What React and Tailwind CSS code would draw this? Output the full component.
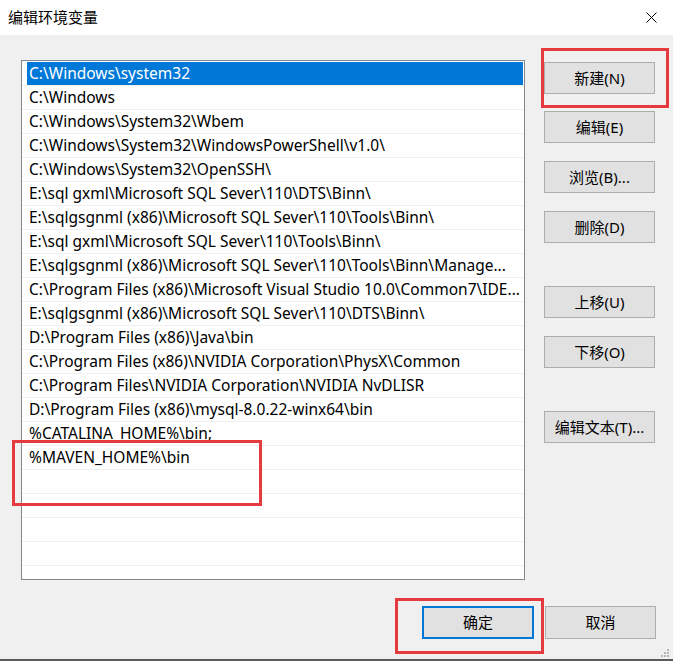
import React from 'react';

const paths = [
  'C:\\Windows\\system32',
  'C:\\Windows',
  'C:\\Windows\\System32\\Wbem',
  'C:\\Windows\\System32\\WindowsPowerShell\\v1.0\\',
  'C:\\Windows\\System32\\OpenSSH\\',
  'E:\\sql gxml\\Microsoft SQL Sever\\110\\DTS\\Binn\\',
  'E:\\sqlgsgnml (x86)\\Microsoft SQL Sever\\110\\Tools\\Binn\\',
  'E:\\sql gxml\\Microsoft SQL Sever\\110\\Tools\\Binn\\',
  'E:\\sqlgsgnml (x86)\\Microsoft SQL Sever\\110\\Tools\\Binn\\Manage...',
  'C:\\Program Files (x86)\\Microsoft Visual Studio 10.0\\Common7\\IDE...',
  'E:\\sqlgsgnml (x86)\\Microsoft SQL Sever\\110\\DTS\\Binn\\',
  'D:\\Program Files (x86)\\Java\\bin',
  'C:\\Program Files (x86)\\NVIDIA Corporation\\PhysX\\Common',
  'C:\\Program Files\\NVIDIA Corporation\\NVIDIA NvDLISR',
  'D:\\Program Files (x86)\\mysql-8.0.22-winx64\\bin',
  '%CATALINA_HOME%\\bin;',
  '%MAVEN_HOME%\\bin',
  '', '', '', '', '',
];

function Btn({ children, className = '' }) {
  return (
    <div className={`w-[111px] h-[32px] flex items-center justify-center bg-[#e1e1e1] border border-[#adadad] text-[15px] text-black ${className}`}>
      {children}
    </div>
  );
}

export default function App() {
  return (
    <div className="relative w-[673px] h-[661px] bg-[#f0f0f0] overflow-hidden"
      style={{ fontFamily: '"Noto Sans", "Noto Sans CJK SC", sans-serif' }}>
      {/* title bar */}
      <div className="h-[35px] bg-white flex items-center justify-between pl-[8px] pr-[16px]">
        <span className="text-[15px] text-black leading-none">编辑环境变量</span>
        <svg width="11" height="11" viewBox="0 0 11 11" className="block">
          <path d="M0.5 0.5 L10.5 10.5 M10.5 0.5 L0.5 10.5" stroke="#000" strokeWidth="1" />
        </svg>
      </div>

      {/* body */}
      <div className="flex flex-col pl-[21px] pr-[17px] pt-[25px]">
        <div className="flex">
          <div className="w-[504px] h-[520px] bg-white border border-[#828790] pt-px overflow-hidden">
            {paths.map((p, i) => (
              <div key={i} className="h-[24px] border-b border-[#f0f0f0] flex">
                <div className={`ml-[5px] mr-px flex-1 h-[23px] flex items-center pl-[2px] pr-[2px] whitespace-nowrap overflow-hidden text-[15.5px] leading-none ${i === 0 ? 'bg-[#0078d7] text-white' : 'text-black'}`}>
                  {p}
                </div>
              </div>
            ))}
          </div>
          <div className="ml-[19px] mt-[2px] flex flex-col">
            <Btn>新建(N)</Btn>
            <Btn className="mt-[17px]">编辑(E)</Btn>
            <Btn className="mt-[18px]">浏览(B)...</Btn>
            <Btn className="mt-[18px]">删除(D)</Btn>
            <Btn className="mt-[43px]">上移(U)</Btn>
            <Btn className="mt-[18px]">下移(O)</Btn>
            <Btn className="mt-[43px]">编辑文本(T)...</Btn>
          </div>
        </div>
        <div className="flex justify-end gap-[11px] mt-[26px]">
          <div className="w-[112px] h-[33px] flex items-center justify-center bg-[#e1e1e1] border-2 border-[#0078d7] text-[15px] text-black">确定</div>
          <Btn className="h-[33px]">取消</Btn>
        </div>
      </div>

      {/* window bottom edge */}
      <div className="absolute left-0 right-0 bottom-0 h-[2px] bg-[#5a5a5a]" />

      {/* resize grip */}
      <svg className="absolute right-[4px] bottom-[4px]" width="8" height="8" viewBox="0 0 8 8">
        <rect x="6" y="0" width="2" height="2" fill="#b5b5b5" />
        <rect x="3" y="3" width="2" height="2" fill="#b5b5b5" />
        <rect x="6" y="3" width="2" height="2" fill="#b5b5b5" />
        <rect x="0" y="6" width="2" height="2" fill="#b5b5b5" />
        <rect x="3" y="6" width="2" height="2" fill="#b5b5b5" />
        <rect x="6" y="6" width="2" height="2" fill="#b5b5b5" />
      </svg>

      {/* red annotation boxes */}
      <div className="absolute left-[541px] top-[48px] w-[128px] h-[60px] border-[3px] border-[#e53a40]" />
      <div className="absolute left-[12px] top-[440px] w-[250px] h-[66px] border-[3px] border-[#e53a40]" />
      <div className="absolute left-[395px] top-[598px] w-[149px] h-[56px] border-[3px] border-[#e53a40]" />
    </div>
  );
}
